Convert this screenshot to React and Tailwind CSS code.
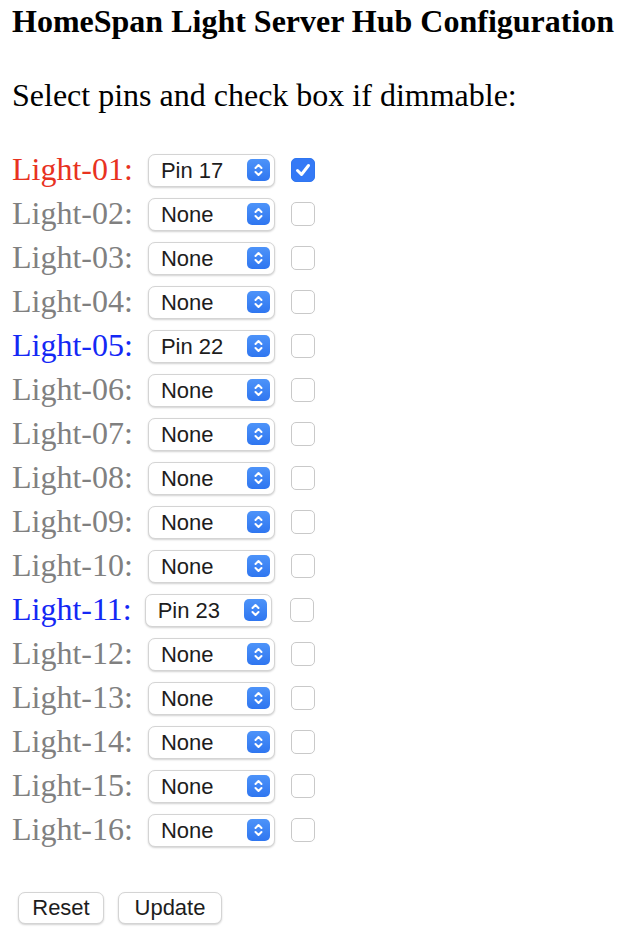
import { useState } from "react"

const PINS = ["None", "Pin 16", "Pin 17", "Pin 18", "Pin 19", "Pin 21", "Pin 22", "Pin 23", "Pin 25", "Pin 26", "Pin 27", "Pin 32", "Pin 33"]

const START = {
  1: { pin: "Pin 17", dim: true },
  5: { pin: "Pin 22", dim: false },
  11: { pin: "Pin 23", dim: false },
}

function Stepper() {
  return (
    <span className="pointer-events-none absolute right-[5px] top-1/2 flex h-[22px] w-[23px] -translate-y-1/2 items-center justify-center rounded-[5px] bg-gradient-to-b from-[#4d93f9] to-[#2f76f0]">
      <svg width="23" height="22" viewBox="0 0 23 22" fill="none" stroke="white" strokeWidth="2" strokeLinecap="round" strokeLinejoin="round">
        <path d="M8.5 9 L11.5 6 L14.5 9" />
        <path d="M8.5 13 L11.5 16 L14.5 13" />
      </svg>
    </span>
  )
}

function LightRow({ n, light, onChange }) {
  const id = String(n).padStart(2, "0")
  const color =
    light.pin === "None" ? "text-[#808080]" : light.dim ? "text-[#e8321f]" : "text-[#1428f5]"

  return (
    <div className="flex h-[44px] items-center">
      <span className={`${color} mt-[6px] whitespace-nowrap`}>Light-{id}:</span>
      <div className={`relative mt-2 ${n === 11 ? "ml-[13px]" : "ml-[15px]"}`}>
        <select
          value={light.pin}
          onChange={(e) => onChange({ ...light, pin: e.target.value })}
          className="block h-[33px] w-[127px] appearance-none rounded-[7px] border border-[#d4d4d4] bg-white py-0 pl-[12px] font-['Liberation_Sans',Arial,sans-serif] text-[22px] leading-[31px] text-[#1d1d1d] shadow-[0_1px_2px_rgba(0,0,0,0.18)] outline-none"
        >
          {PINS.map((p) => (
            <option key={p}>{p}</option>
          ))}
        </select>
        <Stepper />
      </div>
      <label className={`relative mt-2 flex h-[24px] w-[24px] items-center justify-center ${n === 11 ? "ml-[18px]" : "ml-[16px]"}`}>
        <input
          type="checkbox"
          checked={light.dim}
          onChange={(e) => onChange({ ...light, dim: e.target.checked })}
          className={`h-[24px] w-[24px] appearance-none rounded-[5px] border ${
            light.dim ? "border-[#2f76f0] bg-[#3479f6]" : "border-[#c9c9c9] bg-white"
          }`}
        />
        {light.dim && (
          <svg className="pointer-events-none absolute" width="18" height="18" viewBox="0 0 18 18" fill="none" stroke="white" strokeWidth="3" strokeLinecap="round" strokeLinejoin="round">
            <path d="M3.5 9.5 L7.5 13.5 L14.5 4.5" />
          </svg>
        )}
      </label>
    </div>
  )
}

const initial = () =>
  Array.from({ length: 16 }, (_, i) => START[i + 1] ?? { pin: "None", dim: false })

export default function App() {
  const [lights, setLights] = useState(initial)

  const update = (i, v) => setLights((ls) => ls.map((l, k) => (k === i ? v : l)))

  return (
    <div className="min-h-[938px] bg-white px-[12px] pt-[3px] font-['Liberation_Serif','Times_New_Roman',serif] text-[32px] leading-[36px] text-black">
      <h2 className="font-bold">HomeSpan Light Server Hub Configuration</h2>
      <p className="mt-[38px]">Select pins and check box if dimmable:</p>

      <div className="mt-[31px]">
        {lights.map((l, i) => (
          <LightRow key={i} n={i + 1} light={l} onChange={(v) => update(i, v)} />
        ))}
      </div>

      <div className="ml-[6px] mt-[44px] flex gap-[14px] font-['Liberation_Sans',Arial,sans-serif] text-[22px] text-[#1d1d1d]">
        <button
          onClick={() => setLights(initial())}
          className="h-[32px] w-[86px] rounded-[7px] border border-[#d4d4d4] bg-white leading-none shadow-[0_1px_2px_rgba(0,0,0,0.18)]"
        >
          Reset
        </button>
        <button className="h-[32px] w-[104px] rounded-[7px] border border-[#d4d4d4] bg-white leading-none shadow-[0_1px_2px_rgba(0,0,0,0.18)]">
          Update
        </button>
      </div>
    </div>
  )
}
